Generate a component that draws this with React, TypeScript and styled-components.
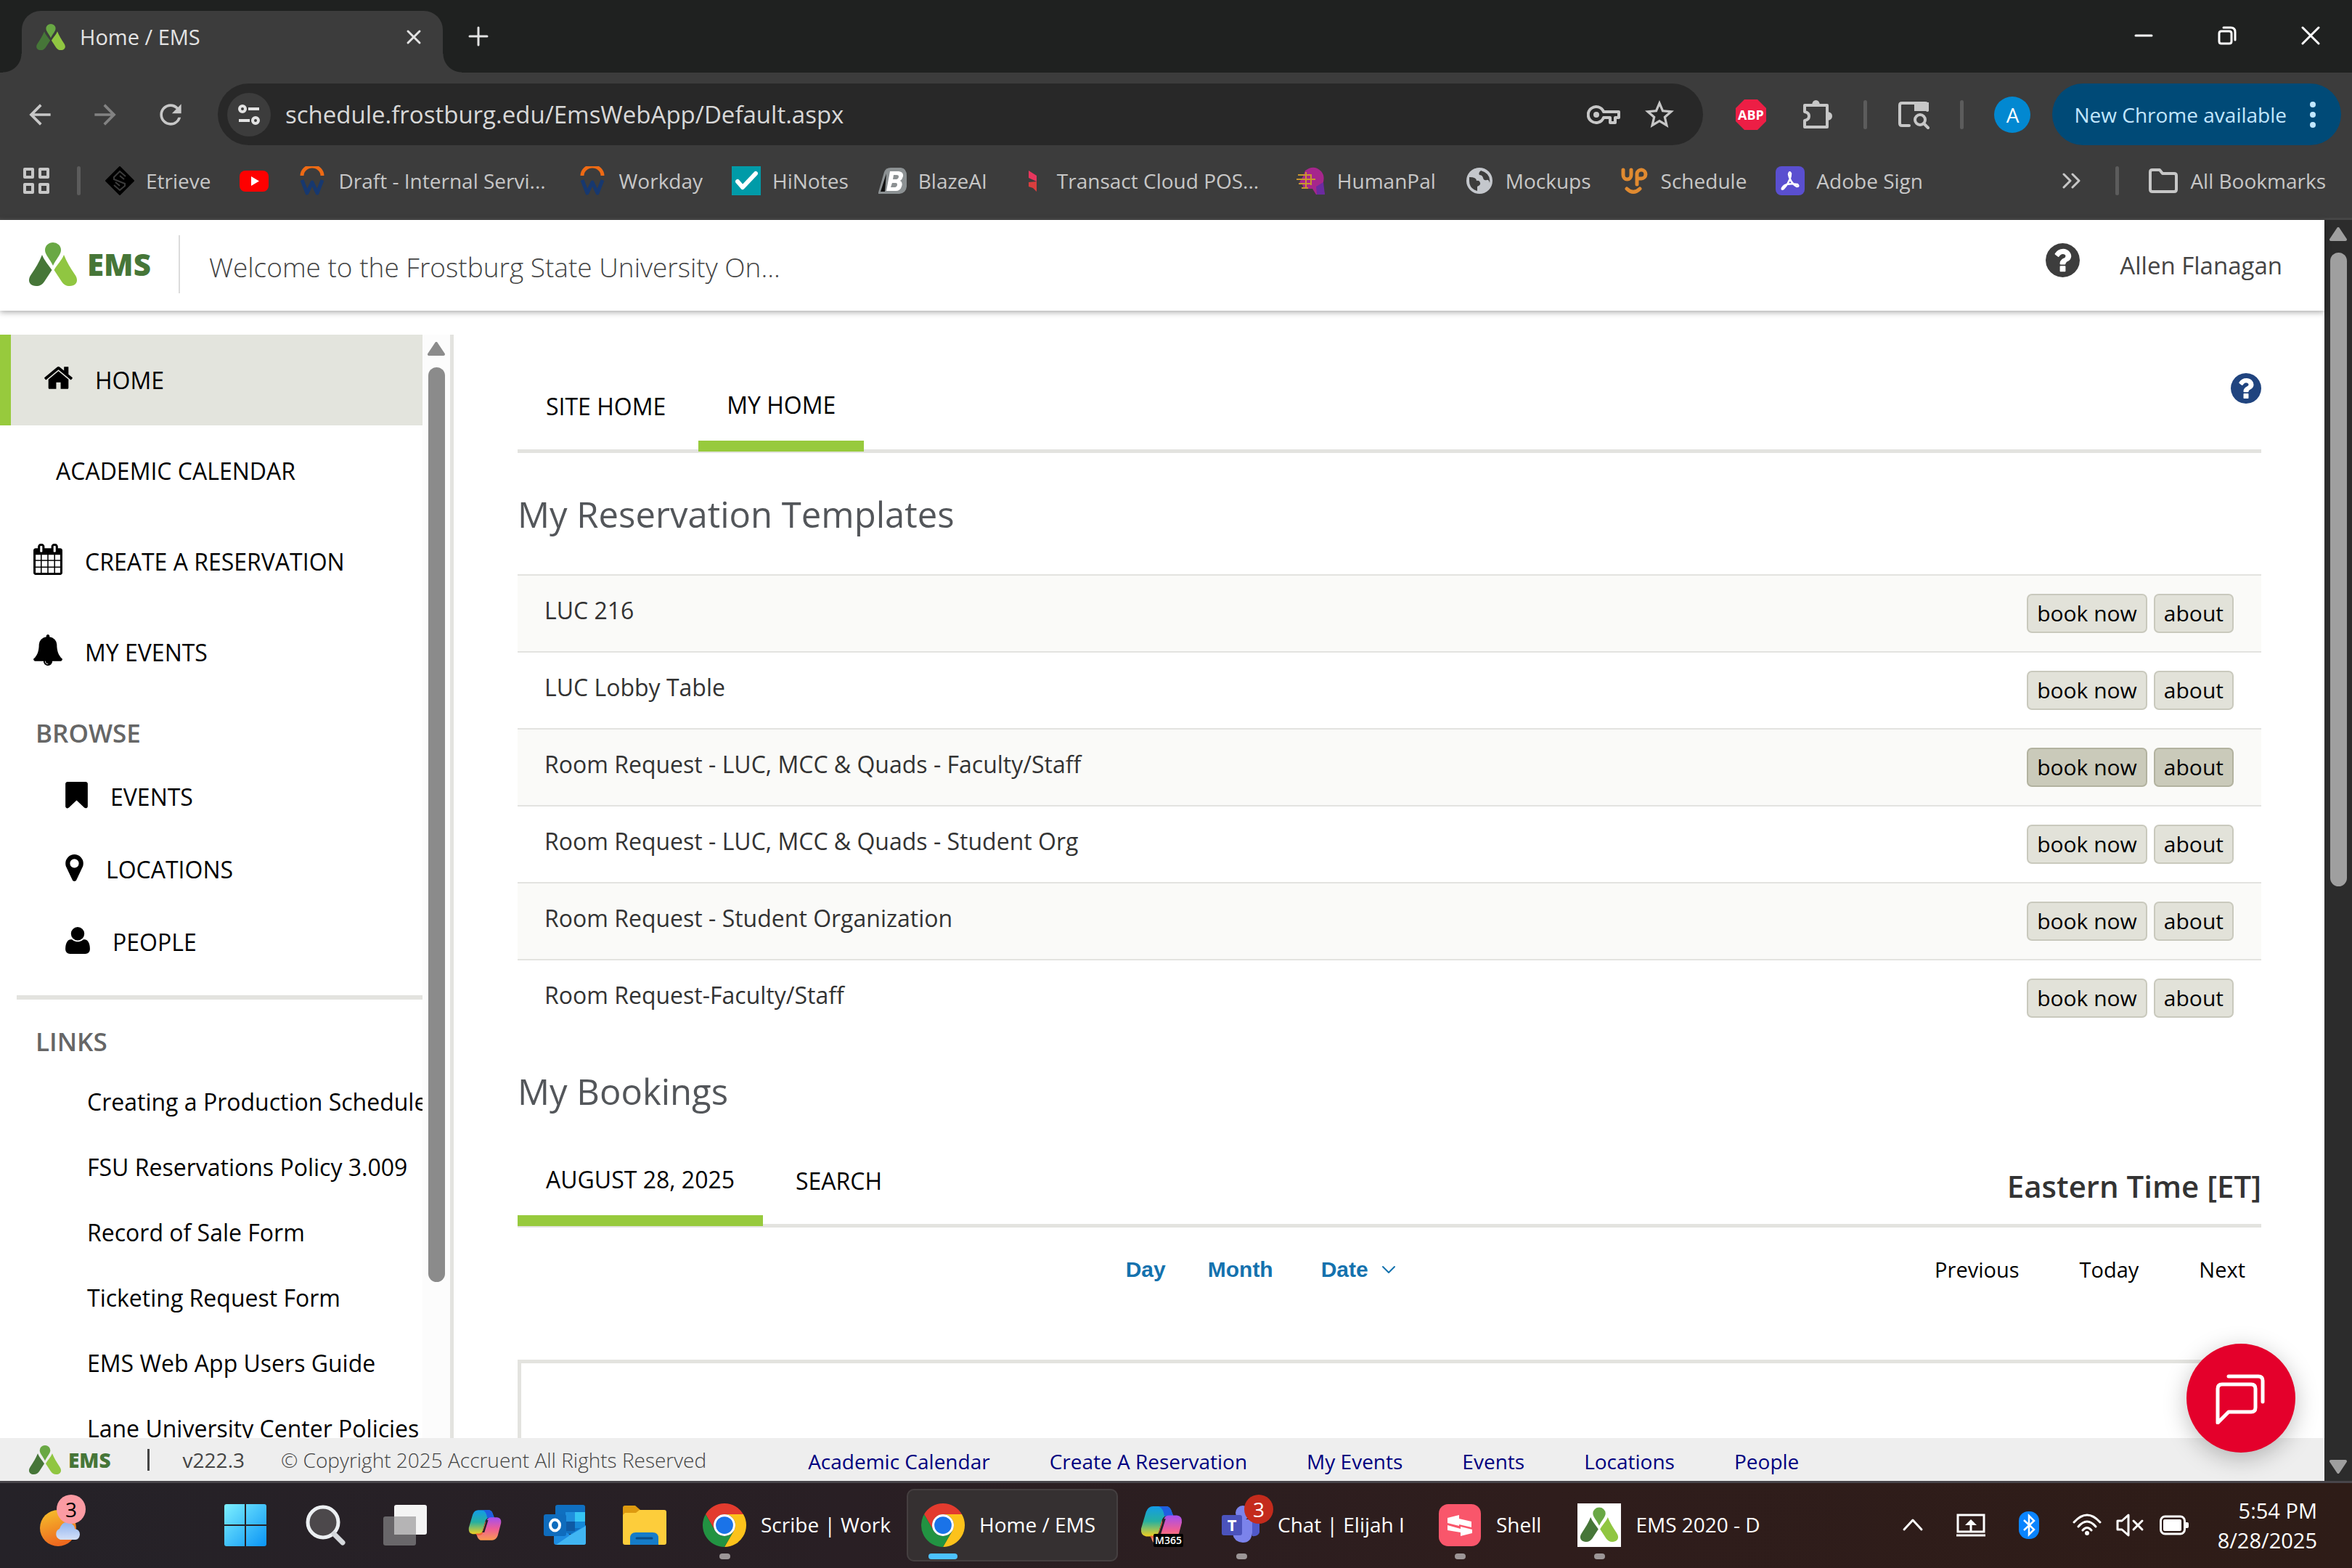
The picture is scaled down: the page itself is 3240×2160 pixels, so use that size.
import React from "react";
import styled, { createGlobalStyle, css } from "styled-components";
import { MdArrowBack, MdArrowForward, MdRefresh, MdStarBorder } from "react-icons/md";

const GlobalStyle = createGlobalStyle`
  *, *::before, *::after { box-sizing: border-box; }
  body { margin: 0; background: #252228; font-family: "Open Sans", "Noto Sans", sans-serif; }
  button, input { font: inherit; color: inherit; }
  button { border: 0; padding: 0; background: none; cursor: pointer; }
  a { color: inherit; text-decoration: none; }
  h1, h2, ul { margin: 0; padding: 0; }
  ul { list-style: none; }
  svg { display: block; flex: none; }
`;

/* ---------- Browser chrome ---------- */

const Screen = styled.div`
  display: flex;
  flex-direction: column;
  height: 100vh;
  overflow: hidden;
`;

const TabStrip = styled.header`
  display: flex;
  align-items: flex-end;
  flex: none;
  height: 100px;
  padding: 0 0 0 30px;
  background: #1f2120;
  color: #e3e3e3;
`;

const Tab = styled.div`
  position: relative;
  display: flex;
  align-items: center;
  width: 580px;
  height: 85px;
  padding: 0 28px 14px 20px;
  border-radius: 26px 26px 0 0;
  background: #3c3c3c;
  font-size: 29px;
  line-height: 40px;
  &::before, &::after {
    content: "";
    position: absolute;
    bottom: 0;
    width: 26px;
    height: 26px;
  }
  &::before { right: 100%; background: radial-gradient(circle at 0 0, transparent 25px, #3c3c3c 26px); }
  &::after { left: 100%; background: radial-gradient(circle at 100% 0, transparent 25px, #3c3c3c 26px); }
`;

const TabTitle = styled.span`
  flex: 1;
  padding-left: 20px;
`;

const IconButton = styled.button<{ $w: number; $dim?: boolean }>`
  display: flex;
  align-items: center;
  justify-content: center;
  flex: none;
  width: ${(p) => p.$w}px;
  opacity: ${(p) => (p.$dim ? 0.5 : 1)};
`;

const NewTab = styled(IconButton)`
  height: 100px;
  margin-left: 24px;
`;

const WindowControls = styled.div`
  display: flex;
  height: 98px;
  align-self: flex-start;
  margin-left: auto;
  color: #fff;
`;

const Toolbar = styled.div`
  display: flex;
  align-items: center;
  flex: none;
  height: 115px;
  padding: 0 15px 0 10px;
  background: #3c3c3c;
  color: #c7c7c7;
`;

const Omnibox = styled.div`
  display: flex;
  align-items: center;
  flex: 1;
  height: 85px;
  margin-left: 20px;
  padding: 0 36px 0 13px;
  border-radius: 43px;
  background: #282828;
`;

const SiteInfo = styled.button`
  display: grid;
  place-items: center;
  width: 60px;
  height: 60px;
  border-radius: 50%;
  background: #3c3c3c;
`;

const UrlInput = styled.input`
  flex: 1;
  min-width: 0;
  margin: 0 20px;
  padding: 0;
  border: 0;
  outline: 0;
  background: none;
  color: #d8d8d8;
  font-size: 33px;
  line-height: 46px;
`;

const OmniActions = styled.div`
  display: flex;
  align-items: center;
  gap: 30px;
`;

const Extensions = styled.div`
  display: flex;
  align-items: center;
  gap: 42px;
  margin: 0 30px 0 45px;
`;

const Separator = styled.span`
  width: 5px;
  height: 40px;
  border-radius: 3px;
  background: #5c5c5c;
`;

const Avatar = styled.button`
  width: 50px;
  height: 50px;
  border-radius: 50%;
  background: #0288d1;
  color: #fff;
  font-size: 28px;
  line-height: 50px;
`;

const UpdatePill = styled.button`
  display: flex;
  align-items: center;
  gap: 31px;
  height: 85px;
  padding: 0 34px 0 30px;
  border-radius: 43px;
  background: #004a77;
  color: #c2e7ff;
  font-size: 28px;
  line-height: 38px;
  white-space: nowrap;
`;

const BookmarkBar = styled.nav`
  display: flex;
  align-items: center;
  flex: none;
  height: 88px;
  padding: 0 36px 18px 30px;
  border-bottom: 3px solid #464646;
  background: #3c3c3c;
  color: #c7c7c7;
  font-size: 28px;
  line-height: 38px;
  white-space: nowrap;
`;

const BookmarkList = styled.ul`
  display: flex;
  gap: 40px;
  margin: 0 auto 0 34px;
`;

const Bookmark = styled.a`
  display: flex;
  align-items: center;
  gap: 16px;
  min-height: 40px;
`;

const BookmarkLabel = styled.span<{ $full: boolean }>`
  min-width: ${(p) => (p.$full ? "290px" : "0")};
`;

const Spaced = styled.div`
  display: flex;
  align-items: center;
  gap: 36px;
`;

const SpacedEnd = styled(Spaced)`
  gap: 40px;
`;

/* ---------- EMS page ---------- */

const Viewport = styled.div`
  display: flex;
  flex: 1;
  min-height: 0;
`;

const Page = styled.div`
  position: relative;
  display: flex;
  flex-direction: column;
  flex: 1;
  min-width: 0;
  background: #fff;
`;

const PageHeader = styled.header`
  z-index: 1;
  display: flex;
  align-items: center;
  flex: none;
  height: 125px;
  padding: 0 58px 4px 40px;
  background: #fff;
  box-shadow: 0 2px 8px rgba(0, 0, 0, 0.35);
  color: #444;
`;

const Brand = styled.a<{ $small?: boolean }>`
  display: flex;
  align-items: center;
  gap: ${(p) => (p.$small ? 10 : 14)}px;
  color: #467638;
  font-size: ${(p) => (p.$small ? 28 : 42)}px;
  line-height: 58px;
  font-weight: 800;
`;

const SiteTitle = styled.h1`
  margin-left: 38px;
  padding: 18px 0 10px 40px;
  border-left: 2px solid #dcdcdc;
  color: #444;
  font-size: 37px;
  line-height: 52px;
  font-weight: 300;
`;

const HeaderUser = styled.div`
  display: flex;
  align-items: center;
  gap: 55px;
  margin-left: auto;
  font-size: 33px;
  line-height: 46px;
  a { padding-top: 4px; }
  button { margin-bottom: 10px; }
`;

const Body = styled.div`
  display: flex;
  flex: 1;
  min-height: 0;
`;

const Sidebar = styled.aside`
  display: flex;
  flex: none;
  width: 625px;
  margin-top: 33px;
  border-right: 5px solid #e3e3df;
  overflow: hidden;
`;

const SideNav = styled.nav`
  flex: 1;
  min-width: 0;
  overflow: hidden;
  color: #000;
  font-size: 32px;
  line-height: 46px;
  white-space: nowrap;
`;

const NavItem = styled.a<{ $active?: boolean; $sub?: boolean }>`
  display: flex;
  align-items: center;
  gap: 31px;
  height: ${(p) => (p.$sub ? 100 : 125)}px;
  padding-left: ${(p) => (p.$sub ? 90 : 46)}px;
  svg { margin-bottom: 6px; }
  ${(p) =>
    p.$active &&
    css`
      border-left: 15px solid #97ca3d;
      background: #e3e4dd;
    `}
`;

const NavHeading = styled.h2`
  padding: 25px 0 14px 49px;
  color: #666;
  font-size: 35px;
  line-height: 48px;
  font-weight: 600;
`;

const NavRule = styled.hr`
  height: 6px;
  margin: 23px 0 9px 23px;
  border: 0;
  background: #e3e3df;
`;

const SideLink = styled.a`
  display: block;
  padding: 22px 0 22px 120px;
`;

const Track = styled.div<{ $dark?: boolean }>`
  display: flex;
  flex-direction: column;
  align-items: center;
  flex: none;
  width: 38px;
  padding: 10px 0;
  background: ${(p) => (p.$dark ? "#2c2c2c" : "#fcfcfc")};
  color: ${(p) => (p.$dark ? "#9f9f9f" : "#8b8b8b")};
`;

const Thumb = styled.div<{ $part: number }>`
  flex: ${(p) => p.$part};
  width: 23px;
  margin-top: 16px;
  border-radius: 12px;
  background: currentColor;
`;

const Rest = styled.div<{ $part: number }>`
  flex: ${(p) => p.$part};
`;

const Main = styled.main`
  display: flex;
  flex-direction: column;
  flex: 1;
  min-width: 0;
  padding: 86px 87px 0 88px;
  overflow: hidden;
`;

const TabBar = styled.div`
  display: flex;
  gap: 6px;
  flex: none;
  height: 110px;
  border-bottom: 5px solid #e3e3df;
`;

const PageTab = styled.button<{ $active?: boolean }>`
  height: 108px;
  padding: ${(p) => (p.$active ? "21px 39px 26px" : "23px 39px 24px")};
  border-bottom: 15px solid ${(p) => (p.$active ? "#97ca3d" : "transparent")};
  color: #000;
  font-size: 32px;
  line-height: 46px;
  white-space: nowrap;
`;

const TabAside = styled.div`
  display: flex;
  align-items: flex-start;
  margin-left: auto;
`;

const TimeZone = styled.strong`
  color: #333;
  font-size: 42px;
  line-height: 105px;
  font-weight: 600;
`;

const SectionTitle = styled.h2<{ $first?: boolean }>`
  flex: none;
  margin: ${(p) => (p.$first ? "51px 0 50px" : "43px 0 45px")};
  color: #53565a;
  font-size: 49px;
  line-height: 66px;
  font-weight: 400;
`;

const TemplateTable = styled.table`
  flex: none;
  width: 100%;
  border-collapse: separate;
  border-spacing: 0;
  color: #333;
  font-size: 32px;
  line-height: 46px;
  tr:nth-child(odd) { background: #fafaf8; }
  td {
    height: 106px;
    padding: 0 38px 0 37px;
    border-top: 2px solid #e3e3e0;
    vertical-align: middle;
  }
  td:first-child { padding-bottom: 8px; }
`;

const RowActions = styled.div`
  display: flex;
  justify-content: flex-end;
  gap: 9px;
`;

const SmallButton = styled.button<{ $pressed?: boolean }>`
  padding: 4px 12px;
  border: 2px solid ${(p) => (p.$pressed ? "#b2b29f" : "#c9c9bd")};
  border-radius: 7px;
  background: ${(p) => (p.$pressed ? "#cacaba" : "#e2e2d9")};
  color: #000;
  font-size: 30px;
  line-height: 42px;
`;

const Controls = styled.div`
  display: flex;
  align-items: center;
  flex: none;
  height: 116px;
  margin-bottom: 66px;
  padding: 0 22px 0 calc(35% - 3px);
`;

const ViewLinks = styled.div`
  display: flex;
  align-items: center;
  gap: 58px;
  color: #1472ae;
  font: bold 30px/40px "Liberation Sans", Arial, sans-serif;
  button:last-child { display: flex; align-items: center; gap: 18px; margin-left: 8px; }
`;

const PagerLinks = styled.div`
  display: flex;
  gap: 83px;
  margin-left: auto;
  color: #000;
  font-size: 29px;
  line-height: 40px;
`;

const CalendarBox = styled.div`
  flex: 1;
  border: 5px solid #e3e3df;
  border-bottom: 0;
`;

const ChatButton = styled.button`
  position: absolute;
  right: 40px;
  bottom: 39px;
  z-index: 3;
  display: grid;
  place-items: center;
  width: 150px;
  height: 150px;
  border-radius: 50%;
  background: #e4002b;
  box-shadow: 0 8px 32px rgba(0, 0, 0, 0.25);
`;

const PageFooter = styled.footer`
  z-index: 2;
  display: flex;
  align-items: center;
  flex: none;
  height: 59px;
  padding-left: 40px;
  background: #eee;
  color: #444;
  font-size: 28px;
  line-height: 38px;
  white-space: nowrap;
`;

const FooterBar = styled.span`
  width: 3px;
  height: 30px;
  margin: 0 46px 0 50px;
  background: #444;
`;

const Copyright = styled.span`
  margin-left: 50px;
  font-weight: 300;
`;

const FooterLinks = styled.nav`
  display: flex;
  gap: 82px;
  margin-left: 140px;
  padding-top: 4px;
  color: #00007f;
`;

/* ---------- Taskbar ---------- */

const Taskbar = styled.footer`
  display: flex;
  align-items: center;
  flex: none;
  height: 120px;
  padding: 0 48px 2px 0;
  border-top: 3px solid #48454a;
  background: linear-gradient(90deg, #252228, #291f24 36%, #2f1d1c 66%, #2e1c17);
  color: #fff;
  font-size: 29px;
  line-height: 41px;
  white-space: nowrap;
`;

const WeatherSlot = styled.div`
  width: 288px;
  padding-left: 50px;
`;

const TaskList = styled.div`
  display: flex;
  gap: 10px;
`;

const TaskButton = styled.button<{ $active?: boolean }>`
  display: flex;
  align-items: center;
  gap: 20px;
  height: 100px;
  padding: 0 20px;
  border-radius: 10px;
  background: ${(p) => (p.$active ? "#353031" : "none")};
  box-shadow: ${(p) => (p.$active ? "inset 0 0 0 2px #453f40" : "none")};
`;

const TaskIcon = styled.span<{ $mark?: "dot" | "bar" }>`
  position: relative;
  display: grid;
  place-items: center;
  width: 60px;
  height: 60px;
  ${(p) =>
    p.$mark &&
    css`
      &::after {
        content: "";
        position: absolute;
        top: 69px;
        left: ${p.$mark === "bar" ? 10 : 23}px;
        width: ${p.$mark === "bar" ? 40 : 15}px;
        height: 8px;
        border-radius: 4px;
        background: ${p.$mark === "bar" ? "#4cc2ff" : "#9c9697"};
      }
    `}
`;

const TaskLabel = styled.span<{ $wide?: boolean }>`
  width: ${(p) => (p.$wide ? "181px" : "auto")};
  margin-right: ${(p) => (p.$wide ? -10 : 0)}px;
  overflow: hidden;
  font-size: 28px;
  text-align: left;
`;

const Badge = styled.span<{ $pink?: boolean }>`
  position: absolute;
  top: -12px;
  right: ${(p) => (p.$pink ? -8 : -14)}px;
  width: 40px;
  height: 40px;
  border-radius: 50%;
  background: ${(p) => (p.$pink ? "#fb9ba3" : "#c42b1c")};
  color: ${(p) => (p.$pink ? "#000" : "#fff")};
  font-size: 28px;
  line-height: 40px;
  text-align: center;
`;

const Tray = styled.div`
  display: flex;
  align-items: center;
  gap: 40px;
  margin-left: auto;
`;

const TrayGroup = styled.div`
  display: flex;
  gap: 20px;
`;

const Clock = styled.time`
  text-align: right;
`;

/* ---------- Drawings ---------- */

const Line = ({ d, w = 40, h = w, box = `0 0 ${w} ${h}`, sw = 4, color = "currentColor" }: any) => (
  <svg width={w} height={h} viewBox={box} fill="none" stroke={color} strokeWidth={sw} strokeLinecap="round" strokeLinejoin="round">
    <path d={d} />
  </svg>
);

const glyphs = {
  home: [90, 1612, "M1472 992v480q0 26-19 45t-45 19h-384v-384h-256v384h-384q-26 0-45-19t-19-45v-480q0-1 .5-3t.5-3l575-474 575 474q1 2 1 6zm223-69l-62 74q-8 9-21 11h-3q-13 0-21-7l-692-577-692 577q-12 8-24 7-13-2-21-11l-62-74q-8-10-7-23.5t11-21.5l719-599q32-26 76-26t76 26l244 204v-195q0-14 9-23t23-9h192q14 0 23 9t9 23v408l219 182q10 8 11 21.5t-7 23.5z"],
  calendar: [64, 1664, "M192 1664h288v-288h-288v288zm352 0h320v-288h-320v288zm-352-352h288v-320h-288v320zm352 0h320v-320h-320v320zm-352-384h288v-288h-288v288zm736 736h320v-288h-320v288zm-384-736h320v-288h-320v288zm768 736h288v-288h-288v288zm-384-352h320v-320h-320v320zm-352-864v-288q0-13-9.5-22.5t-22.5-9.5h-64q-13 0-22.5 9.5t-9.5 22.5v288q0 13 9.5 22.5t22.5 9.5h64q13 0 22.5-9.5t9.5-22.5zm736 864h288v-320h-288v320zm-384-384h320v-288h-320v288zm384 0h288v-288h-288v288zm32-480v-288q0-13-9.5-22.5t-22.5-9.5h-64q-13 0-22.5 9.5t-9.5 22.5v288q0 13 9.5 22.5t22.5 9.5h64q13 0 22.5-9.5t9.5-22.5zm384-64v1280q0 52-38 90t-90 38h-1408q-52 0-90-38t-38-90v-1280q0-52 38-90t90-38h128v-96q0-66 47-113t113-47h64q66 0 113 47t47 113v96h384v-96q0-66 47-113t113-47h64q66 0 113 47t47 113v96h128q52 0 90 38t38 90z"],
  bell: [64, 1664, "M912 1696q0-16-16-16-59 0-101.5-42.5t-42.5-101.5q0-16-16-16t-16 16q0 73 51.5 124.5t124.5 51.5q16 0 16-16zm816-288q0 52-38 90t-90 38h-448q0 106-75 181t-181 75-181-75-75-181h-448q-52 0-90-38t-38-90q50-42 91-88t85-119.5 74.5-158.5 50-206 19.5-260q0-152 117-282.5t307-158.5q-8-19-8-39 0-40 28-68t68-28 68 28 28 68q0 20-8 39 190 28 307 158.5t117 282.5q0 139 19.5 260t50 206 74.5 158.5 85 119.5 91 88z"],
  bookmark: [256, 1280, "M1420 128q23 0 44 9 33 13 52.5 41t19.5 62v1289q0 34-19.5 62t-52.5 41q-19 8-44 8-48 0-83-32l-441-424-441 424q-36 33-83 33-23 0-44-9-33-13-52.5-41t-19.5-62v-1289q0-34 19.5-62t52.5-41q21-9 44-9h1048z"],
  marker: [384, 1024, "M1152 640q0-106-75-181t-181-75-181 75-75 181 75 181 181 75 181-75 75-181zm256 0q0 109-33 179l-364 774q-16 33-47.5 52t-67.5 19-67.5-19-46.5-52l-365-774q-33-70-33-179 0-212 150-362t362-150 362 150 150 362z"],
  user: [192, 1408, "M1600 1405q0 120-73 189.5t-194 69.5h-874q-121 0-194-69.5t-73-189.5q0-53 3.5-103.5t14-109 26.5-108.5 43-97.5 62-81 85.5-53.5 111.5-20q9 0 42 21.5t74.5 48 108 48 133.5 21.5 133.5-21.5 108-48 74.5-48 42-21.5q61 0 111.5 20t85.5 53.5 62 81 43 97.5 26.5 108.5 14 109 3.5 103.5zm-320-893q0 159-112.5 271.5t-271.5 112.5-271.5-112.5-112.5-271.5 112.5-271.5 271.5-112.5 271.5 112.5 112.5 271.5z"],
} as const;

const Glyph = ({ name }: { name: keyof typeof glyphs }) => {
  const [x, w, d] = glyphs[name];
  return (
    <svg width={Math.round((w * 43) / 1792)} height={43} viewBox={`${x} 0 ${w} 1792`} fill="currentColor">
      <path d={d} />
    </svg>
  );
};

const HelpIcon = ({ size, color }: { size: number; color: string }) => (
  <svg width={size} height={size} viewBox="128 128 1536 1536" fill={color}>
    <path d="M1024 1376v-192q0-14-9-23t-23-9h-192q-14 0-23 9t-9 23v192q0 14 9 23t23 9h192q14 0 23-9t9-23zm256-672q0-88-55.5-163t-138.5-116-170-41q-243 0-371 213-15 24 8 42l132 100q7 6 19 6 16 0 25-12 53-68 86-92 34-24 86-24 48 0 85.5 26t37.5 59q0 38-20 61t-68 45q-63 28-115.5 86.5t-52.5 125.5v36q0 14 9 23t23 9h192q14 0 23-9t9-23q0-19 21.5-49.5t54.5-49.5q32-18 49-28.5t46-35 44.5-48 28-60.5 12.5-81zm384 192q0 209-103 385.5t-279.5 279.5-385.5 103-385.5-103-279.5-279.5-103-385.5 103-385.5 279.5-279.5 385.5-103 385.5 103 279.5 279.5 103 385.5z" />
  </svg>
);

const EmsLeaves = () => (
  <>
    <path d="M33 32C29 23 22 17 22 10.500A11 10.500 0 0 1 44 10.500C44 17 37 23 33 32Z" fill="#69a844" />
    <path d="M18 17C21 25 27 31 31.500 38L21 54C18 58 15 60 10 60C3 60 0 56 0 52C0 49 1 47 3 44C9 35 14 27 18 17Z" fill="#467638" />
    <path d="M48 17C45 25 38 31 34.500 38L45 54C48 58 51 60 56 60C63 60 66 56 66 52C66 49 65 47 63 44C57 35 52 27 48 17Z" fill="#90c641" />
  </>
);

const EmsMark = ({ w }: { w: number }) => (
  <svg width={w} height={Math.round((w * 60) / 66)} viewBox="0 0 66 60">
    <EmsLeaves />
  </svg>
);

const Arrow = ({ down }: { down?: boolean }) => (
  <svg width="24" height="19" viewBox="0 0 24 19" fill="currentColor" stroke="currentColor" strokeWidth="4" strokeLinejoin="round">
    <path d={down ? "M2 2H22L12 17Z" : "M2 17H22L12 2Z"} />
  </svg>
);

const AppsIcon = () => <Line w={40} sw={4} d="M4 4h11v11H4ZM25 4h11v11H25ZM4 25h11v11H4ZM25 25h11v11H25Z" />;

const EtrieveIcon = () => (
  <svg width="40" height="40" viewBox="0 0 40 40">
    <path d="M20 1 39 20 20 39 1 20Z" fill="#000" stroke="#000" strokeWidth="2" strokeLinejoin="round" />
    <path d="M28 14 20 7 12 15V18L27 24V27L20 33 12 26M20 13 26 18M14 22 20 27" fill="none" stroke="#3c3c3c" strokeWidth="2" />
  </svg>
);
const YoutubeIcon = () => (
  <svg width="40" height="40" viewBox="0 0 40 40">
    <rect y="6" width="40" height="29" rx="8" fill="#f00" />
    <path d="M16 14 27 20.500 16 27Z" fill="#fff" />
  </svg>
);
const WorkdayIcon = () => (
  <svg width="40" height="40" viewBox="0 0 40 40" fill="none">
    <path d="M6 13A14 13 0 0 1 34 13" stroke="#ee6a14" strokeWidth="5" />
    <path d="M6 19 13 37 20 22 27 37 34 19" stroke="#17386f" strokeWidth="5" strokeLinejoin="round" />
  </svg>
);
const HiNotesIcon = () => (
  <svg width="40" height="40" viewBox="0 0 40 40">
    <rect width="40" height="40" fill="#009ba8" />
    <path d="M8 21 15 29 33 10" fill="none" stroke="#fff" strokeWidth="6" strokeLinecap="round" strokeLinejoin="round" />
  </svg>
);
const BlazeIcon = () => (
  <svg width="40" height="40" viewBox="0 0 40 40">
    <path d="M1 36 9 8Q11 2 18 2H32Q40 3 40 13V28Q39 37 30 38H1Z" fill="#8c9193" />
    <path d="M4 35 12 10 10 35Z" fill="#111" />
    <path d="M17 7H29Q36 8 35 14Q34 18 31 20Q35 22 33 28Q31 34 25 34H12ZM22 12 21 18H26Q29 17 29 14Q29 12 26 12ZM20 23 18 29H24Q27 28 27 25Q27 23 25 23Z" fill="#fff" fillRule="evenodd" />
  </svg>
);
const TransactIcon = () => (
  <svg width="40" height="40" viewBox="0 0 40 40" fill="#e8365d">
    <path d="M17 6 28 13V21L17 16Z" />
    <path d="M28 21 17 22V28L23 30 28 35Z" fill="#d93e3e" />
  </svg>
);
const HumanIcon = () => (
  <svg width="40" height="40" viewBox="0 0 40 40">
    <path d="M12 6Q24-3 34 7Q40 14 36 25L39 39H27L22 31H10L8 25L4 22L9 14Z" fill="#a6268c" />
    <path d="M27 28 37 22 39 39H28Z" fill="#6b2ba0" />
    <path d="M2 12H20M0 18H26M3 24H20M7 30H16M13 8V30M20 11V26" stroke="#c9962f" strokeWidth="2" />
  </svg>
);
const GlobeIcon = () => (
  <svg width="40" height="40" viewBox="0 0 40 40">
    <circle cx="20" cy="20" r="18" fill="#c4c7cc" />
    <path d="M6 15Q16 15 16 20Q20 19 21 23Q22 26 17 28V34Q6 31 6 20ZM22 6Q18 9 20 12Q24 12 25 16Q26 20 30 19Q33 18 34 23Q36 10 22 6Z" fill="#3c3c3c" />
  </svg>
);
const UpIcon = () => (
  <svg width="40" height="40" viewBox="0 0 40 40" fill="none" stroke="#e08a30" strokeWidth="5" strokeLinecap="round">
    <path d="M4 5V12A5.500 6 0 0 0 15 12V5M23 25V10A6 6 0 1 1 29 17H24M9 31Q18 40 27 31" />
  </svg>
);
const AdobeIcon = () => (
  <svg width="40" height="40" viewBox="0 0 40 40">
    <rect width="40" height="40" rx="8" fill="#5a4fd0" />
    <path d="M9 30Q13 22 30 25Q33 28 29 28Q20 23 18 11Q19 6 21 10Q21 20 11 31Q8 33 9 30Z" fill="none" stroke="#fff" strokeWidth="2.500" />
  </svg>
);
const FolderIcon = () => <Line w={42} h={40} sw={4} d="M3 8Q3 5 6 5H16L20 10H36Q39 10 39 13V32Q39 35 36 35H6Q3 35 3 32Z" />;

const AbpIcon = () => (
  <svg width="50" height="42" viewBox="0 0 50 42">
    <path d="M12 0H30L42 12V30L30 42H12L0 30V12Z" fill="#ed1e45" />
    <text x="21" y="28" fill="#fff" fontSize="18" fontWeight="700" textAnchor="middle" fontFamily="Open Sans, sans-serif">ABP</text>
  </svg>
);
const PuzzleIcon = () => (
  <svg width="42" height="42" viewBox="0 0 42 42" fill="none" stroke="currentColor" strokeWidth="4" strokeLinejoin="round">
    <path d="M3 8H34V38H3V29Q9 28 9 23Q9 18 3 17Z" />
    <path d="M13 7Q14 1 18.500 1Q23 1 24 7ZM35 17Q41 18 41 23Q41 28 35 29Z" fill="currentColor" stroke="none" />
  </svg>
);
const TabSearchIcon = () => (
  <svg width="44" height="42" viewBox="0 0 44 42" fill="none" stroke="currentColor" strokeWidth="4" strokeLinecap="round">
    <path d="M16 36H6Q3 36 3 33V8Q3 5 6 5H38Q41 5 41 8V15" />
    <path d="M25 6H41V14H25Z" fill="currentColor" />
    <circle cx="31" cy="28" r="7" />
    <path d="M36 33 42 39" />
  </svg>
);
const KeyIcon = () => (
  <svg width="46" height="30" viewBox="0 0 46 30" fill="none" stroke="currentColor" strokeWidth="4" strokeLinejoin="round">
    <path d="M23 11A11 11 0 1 0 23 19H32V26H39V19H44V11Z" />
    <circle cx="13" cy="15" r="4" fill="currentColor" stroke="none" />
  </svg>
);
const TuneIcon = () => (
  <svg width="32" height="32" viewBox="0 0 32 32" fill="none" stroke="#e3e3e3" strokeWidth="4">
    <circle cx="7" cy="8" r="4" />
    <path d="M15 8H30M2 24H17" />
    <circle cx="25" cy="24" r="4" />
  </svg>
);
const DotsIcon = () => (
  <svg width="10" height="36" viewBox="0 0 10 36" fill="currentColor">
    <circle cx="5" cy="4" r="4" />
    <circle cx="5" cy="18" r="4" />
    <circle cx="5" cy="32" r="4" />
  </svg>
);

const WeatherIcon = () => (
  <svg width="60" height="70" viewBox="0 0 60 70">
    <defs>
      <linearGradient id="sun" x2="0.300" y2="1"><stop stopColor="#f6c22c" /><stop offset="1" stopColor="#ee6a1f" /></linearGradient>
      <linearGradient id="cloud" x2="0" y2="1"><stop stopColor="#8fb3ee" /><stop offset="1" stopColor="#d4e0f8" /></linearGradient>
    </defs>
    <circle cx="30" cy="34" r="25" fill="url(#sun)" />
    <path d="M33 50A8 8 0 0 1 32 35Q36 23 47 27Q53 30 53 35Q60 36 60 43Q59 50 54 50Z" fill="url(#cloud)" />
  </svg>
);
const WindowsIcon = () => (
  <svg width="58" height="58" viewBox="0 0 58 58">
    <defs><linearGradient id="win" x2="1" y2="1"><stop stopColor="#7df0ff" /><stop offset="1" stopColor="#0a94f5" /></linearGradient></defs>
    <path d="M3 0H28V28H0V3Q0 0 3 0ZM30 0H55Q58 0 58 3V28H30ZM0 30H28V58H3Q0 58 0 55ZM30 30H58V55Q58 58 55 58H30Z" fill="url(#win)" />
  </svg>
);
const SearchIcon = () => (
  <svg width="58" height="58" viewBox="0 0 58 58" fill="none">
    <circle cx="26" cy="25" r="21" fill="#4c484b" stroke="#eceff2" strokeWidth="5" />
    <path d="M41 41 53 53" stroke="#d5d8dc" strokeWidth="7" strokeLinecap="round" />
  </svg>
);
const TaskViewIcon = () => (
  <svg width="60" height="56" viewBox="0 0 60 56">
    <rect y="16" width="45" height="40" rx="3" fill="#69676a" />
    <rect x="15" width="45" height="41" rx="3" fill="#f4f4f4" />
    <path d="M15 16H45V41H15Z" fill="#b5b4b5" />
  </svg>
);
const CopilotIcon = ({ size }: { size: number }) => (
  <svg width={size} height={size} viewBox="0 0 60 56">
    <defs>
      <linearGradient id="cpa" x2="0" y2="1"><stop stopColor="#139be8" /><stop offset="0.500" stopColor="#26b0a0" /><stop offset="1" stopColor="#f2cf20" /></linearGradient>
      <linearGradient id="cpb" x2="0" y2="1"><stop stopColor="#a34ff0" /><stop offset="0.500" stopColor="#ee5c97" /><stop offset="1" stopColor="#fb9a50" /></linearGradient>
    </defs>
    <path d="M18 1H38Q43 2 45 10L47 15H37Q33 15 31 20L26 38Q24 44 18 44H8Q0 43 1 33L8 9Q11 1 18 1Z" fill="url(#cpa)" />
    <path d="M30 1H38Q43 2 45 10L47 15H34Q33 4 26 1Z" fill="#1f5fe0" />
    <path d="M43 55H22Q17 54 15 44H21Q26 43 28 38L33 20Q35 14 41 14H52Q60 15 59 24L53 47Q50 55 43 55Z" fill="url(#cpb)" />
    <path d="M31 28 26 43Q24 47 18 46H15L14 43Q24 44 26 38L31 20Z" fill="#f1633c" />
    <path d="M27 37 33 19H36L29 41H25Z" fill="#252228" />
  </svg>
);
const OutlookIcon = () => (
  <svg width="58" height="56" viewBox="0 0 58 56">
    <rect x="16" width="41" height="40" rx="3" fill="#0f6fc0" />
    <path d="M30 10H43V23H30Z" fill="#1f8fdd" />
    <path d="M43 10H57V23H43Z" fill="#35c4f3" />
    <path d="M30 23H43V36H30Z" fill="#0e5aa5" />
    <path d="M43 23H57V32H43Z" fill="#1488d8" />
    <path d="M14 28 36 41 58 28V52Q58 55 55 55H17Q14 55 14 52Z" fill="#1d8be0" />
    <path d="M58 29V52Q58 55 55 55H17L36 42Z" fill="#40b5f2" />
    <rect y="13" width="31" height="30" rx="3" fill="#0f6cbd" />
    <ellipse cx="15.500" cy="28" rx="6.500" ry="7.500" fill="none" stroke="#fff" strokeWidth="4" />
  </svg>
);
const ExplorerIcon = () => (
  <svg width="60" height="54" viewBox="0 0 60 54">
    <path d="M0 3Q0 0 3 0H17L24 6V16H0Z" fill="#dd9a10" />
    <path d="M3 10H18L23 6H57Q60 6 60 9V51Q60 54 57 54H3Q0 54 0 51V13Z" fill="#fdcd3b" />
    <path d="M10 54V45Q10 37 18 37H41Q49 37 49 45V54Z" fill="#157cc9" />
    <path d="M19 45H40" stroke="#0a4c86" strokeWidth="3" strokeLinecap="round" />
  </svg>
);
const ChromeIcon = () => (
  <svg width="60" height="60" viewBox="0 0 48 48">
    <path d="M24 12H44.785A24 24 0 0 0 3.215 12L13.608 30A12 12 0 0 1 24 12Z" fill="#e33b2e" />
    <path d="M34.392 30L24 48A24 24 0 0 0 44.785 12H24A12 12 0 0 1 34.392 30Z" fill="#fcc21b" />
    <path d="M13.608 30L3.215 12A24 24 0 0 0 24 48L34.392 30A12 12 0 0 1 13.608 30Z" fill="#229342" />
    <circle cx="24" cy="24" r="12" fill="#fff" />
    <circle cx="24" cy="24" r="9.500" fill="#1a73e8" />
  </svg>
);
const M365Tag = styled.span`
  position: absolute;
  right: 0;
  bottom: 0;
  padding: 0 2px;
  border-radius: 2px;
  background: #000;
  font-size: 14px;
  line-height: 18px;
  font-weight: 600;
`;
const TeamsIcon = () => (
  <svg width="60" height="60" viewBox="0 0 60 60">
    <circle cx="32" cy="13" r="10" fill="#7b83eb" />
    <path d="M40 22H55V40Q53 46 45 45Z" fill="#5059c9" />
    <path d="M20 22H45V40Q44 54 32 54Q20 53 18 42Z" fill="#7b83eb" />
    <rect x="3" y="16" width="28" height="28" rx="3" fill="#4b53bc" />
    <text x="17" y="38" fill="#fff" fontSize="22" fontWeight="700" textAnchor="middle" fontFamily="Open Sans, sans-serif">T</text>
  </svg>
);
const ShellIcon = () => (
  <svg width="58" height="58" viewBox="0 0 58 58">
    <rect width="58" height="58" rx="13" fill="#f9566b" />
    <path d="M12 19 28 15V20L45 24V32L28 28V30L12 26ZM12 29 30 34V31L46 35V40L30 44V39L12 36Z" fill="#fff" />
  </svg>
);
const EmsTile = () => (
  <svg width="60" height="60" viewBox="-5 -7 76 76">
    <rect x="-5" y="-7" width="76" height="76" fill="#fff" />
    <EmsLeaves />
  </svg>
);
const CastIcon = () => (
  <svg width="40" height="40" viewBox="0 0 40 40" fill="none" stroke="#fff" strokeWidth="3">
    <path d="M2 6H38V29H2ZM0 34H40M20 28V18" />
    <path d="M12 20 20 12 28 20Z" fill="#fff" stroke="none" />
  </svg>
);
const BluetoothIcon = () => (
  <svg width="40" height="40" viewBox="0 0 40 40" fill="none">
    <rect x="6" y="1" width="28" height="38" rx="13" fill="#0a84ff" />
    <path d="M13 13 27 26 20 33V7L27 14 13 27" stroke="#fff" strokeWidth="2.500" />
  </svg>
);
const WifiIcon = () => (
  <svg width="40" height="40" viewBox="0 0 40 40" fill="none" stroke="#fff" strokeWidth="3" strokeLinecap="round">
    <path d="M2 16Q20-4 38 16M8 22Q20 8 32 22M14 27Q20 20 26 27" />
    <circle cx="20" cy="31" r="3" fill="#fff" stroke="none" />
  </svg>
);
const BatteryIcon = () => (
  <svg width="40" height="40" viewBox="0 0 40 40">
    <rect x="1.500" y="8" width="33" height="24" rx="6" fill="none" stroke="#fff" strokeWidth="3" />
    <rect x="5" y="12" width="25" height="16" rx="2" fill="#fff" />
    <path d="M36 16H38Q40 16 40 18V22Q40 24 38 24H36Z" fill="#fff" />
  </svg>
);
const ChatIcon = () => <Line w={72} h={72} sw={5} d="M19 6H60Q66 6 66 12V41M4 70V23Q4 17 10 17H50Q56 17 56 23V49Q56 55 50 55H19Z" color="#fff" />;

/* ---------- Data ---------- */

const bookmarks = [
  { icon: <EtrieveIcon />, label: "Etrieve" },
  { icon: <YoutubeIcon />, label: "" },
  { icon: <WorkdayIcon />, label: "Draft - Internal Servi..." },
  { icon: <WorkdayIcon />, label: "Workday" },
  { icon: <HiNotesIcon />, label: "HiNotes" },
  { icon: <BlazeIcon />, label: "BlazeAI" },
  { icon: <TransactIcon />, label: "Transact Cloud POS..." },
  { icon: <HumanIcon />, label: "HumanPal" },
  { icon: <GlobeIcon />, label: "Mockups" },
  { icon: <UpIcon />, label: "Schedule" },
  { icon: <AdobeIcon />, label: "Adobe Sign" },
];

const templates = [
  "LUC 216",
  "LUC Lobby Table",
  "Room Request - LUC, MCC & Quads - Faculty/Staff",
  "Room Request - LUC, MCC & Quads - Student Org",
  "Room Request - Student Organization",
  "Room Request-Faculty/Staff",
];

const links = [
  "Creating a Production Schedule",
  "FSU Reservations Policy 3.009",
  "Record of Sale Form",
  "Ticketing Request Form",
  "EMS Web App Users Guide",
  "Lane University Center Policies",
];

const footerLinks = ["Academic Calendar", "Create A Reservation", "My Events", "Events", "Locations", "People"];

/* ---------- App ---------- */

export default function App() {
  return (
    <Screen>
      <GlobalStyle />
      <TabStrip>
        <Tab>
          <EmsMark w={40} />
          <TabTitle>Home / EMS</TabTitle>
          <IconButton $w={24} aria-label="Close tab"><Line w={24} sw={3} d="M4 4 20 20M20 4 4 20" /></IconButton>
        </Tab>
        <NewTab $w={50} aria-label="New tab"><Line w={28} sw={3} d="M14 2V26M2 14H26" /></NewTab>
        <WindowControls>
          <IconButton $w={115} aria-label="Minimize"><Line w={26} sw={3} d="M2 13H24" /></IconButton>
          <IconButton $w={115} aria-label="Restore"><Line w={26} sw={3} d="M5 7H16Q19 7 19 10V21Q19 24 16 24H5Q2 24 2 21V10Q2 7 5 7ZM8 2H18Q24 2 24 8V19" /></IconButton>
          <IconButton $w={115} aria-label="Close"><Line w={26} sw={3} d="M2 2 24 24M24 2 2 24" /></IconButton>
        </WindowControls>
      </TabStrip>

      <Toolbar>
        <IconButton $w={90} aria-label="Back"><MdArrowBack size={44} /></IconButton>
        <IconButton $w={90} $dim aria-label="Forward"><MdArrowForward size={44} /></IconButton>
        <IconButton $w={90} aria-label="Reload"><MdRefresh size={44} /></IconButton>
        <Omnibox>
          <SiteInfo aria-label="Site information"><TuneIcon /></SiteInfo>
          <UrlInput aria-label="Address" defaultValue="schedule.frostburg.edu/EmsWebApp/Default.aspx" />
          <OmniActions>
            <IconButton $w={46} aria-label="Passwords"><KeyIcon /></IconButton>
            <IconButton $w={48} aria-label="Bookmark this page"><MdStarBorder size={48} /></IconButton>
          </OmniActions>
        </Omnibox>
        <Extensions>
          <IconButton $w={50} aria-label="Adblock Plus"><AbpIcon /></IconButton>
          <IconButton $w={42} aria-label="Extensions"><PuzzleIcon /></IconButton>
          <Separator />
          <IconButton $w={44} aria-label="Search tabs"><TabSearchIcon /></IconButton>
          <Separator />
          <Avatar>A</Avatar>
        </Extensions>
        <UpdatePill>New Chrome available<DotsIcon /></UpdatePill>
      </Toolbar>

      <BookmarkBar aria-label="Bookmarks">
        <Spaced>
          <IconButton $w={40} aria-label="Apps"><AppsIcon /></IconButton>
          <Separator />
        </Spaced>
        <BookmarkList>
          {bookmarks.map((b, i) => (
            <li key={i}>
              <Bookmark href="#" aria-label={b.label || "YouTube"}>
                {b.icon}
                {b.label && <BookmarkLabel $full={b.label.endsWith("...")}>{b.label}</BookmarkLabel>}
              </Bookmark>
            </li>
          ))}
        </BookmarkList>
        <SpacedEnd>
          <IconButton $w={40} aria-label="More bookmarks"><Line w={28} h={22} sw={3} d="M3 2 12 11 3 20M15 2 24 11 15 20" /></IconButton>
          <Separator />
          <Bookmark href="#"><FolderIcon />All Bookmarks</Bookmark>
        </SpacedEnd>
      </BookmarkBar>

      <Viewport>
        <Page>
          <PageHeader>
            <Brand href="#"><EmsMark w={66} />EMS</Brand>
            <SiteTitle>Welcome to the Frostburg State University On...</SiteTitle>
            <HeaderUser>
              <IconButton $w={47} aria-label="Help"><HelpIcon size={47} color="#3d3d3d" /></IconButton>
              <a href="#">Allen Flanagan</a>
            </HeaderUser>
          </PageHeader>

          <Body>
            <Sidebar>
              <SideNav aria-label="Main">
                <NavItem href="#" $active><Glyph name="home" />HOME</NavItem>
                <NavItem href="#"><span />ACADEMIC CALENDAR</NavItem>
                <NavItem href="#"><Glyph name="calendar" />CREATE A RESERVATION</NavItem>
                <NavItem href="#"><Glyph name="bell" />MY EVENTS</NavItem>
                <NavHeading>BROWSE</NavHeading>
                <NavItem href="#" $sub><Glyph name="bookmark" />EVENTS</NavItem>
                <NavItem href="#" $sub><Glyph name="marker" />LOCATIONS</NavItem>
                <NavItem href="#" $sub><Glyph name="user" />PEOPLE</NavItem>
                <NavRule />
                <NavHeading>LINKS</NavHeading>
                {links.map((l) => <SideLink href="#" key={l}>{l}</SideLink>)}
              </SideNav>
              <Track>
                <Arrow />
                <Thumb $part={86} />
                <Rest $part={14} />
              </Track>
            </Sidebar>

            <Main>
              <TabBar>
                <PageTab>SITE HOME</PageTab>
                <PageTab $active>MY HOME</PageTab>
                <TabAside>
                  <IconButton $w={42} aria-label="Page help"><HelpIcon size={42} color="#20447f" /></IconButton>
                </TabAside>
              </TabBar>
              <SectionTitle $first>My Reservation Templates</SectionTitle>
              <TemplateTable>
                <tbody>
                  {templates.map((t, i) => (
                    <tr key={t}>
                      <td>{t}</td>
                      <td>
                        <RowActions>
                          <SmallButton $pressed={i === 2}>book now</SmallButton>
                          <SmallButton $pressed={i === 2}>about</SmallButton>
                        </RowActions>
                      </td>
                    </tr>
                  ))}
                </tbody>
              </TemplateTable>
              <SectionTitle>My Bookings</SectionTitle>
              <TabBar>
                <PageTab $active>AUGUST 28, 2025</PageTab>
                <PageTab>SEARCH</PageTab>
                <TabAside><TimeZone>Eastern Time [ET]</TimeZone></TabAside>
              </TabBar>
              <Controls>
                <ViewLinks>
                  <button>Day</button>
                  <button>Month</button>
                  <button>Date<Line w={20} h={14} sw={2} d="M2 3 10 11 18 3" /></button>
                </ViewLinks>
                <PagerLinks>
                  <button>Previous</button>
                  <button>Today</button>
                  <button>Next</button>
                </PagerLinks>
              </Controls>
              <CalendarBox />
            </Main>
          </Body>

          <PageFooter>
            <Brand href="#" $small><EmsMark w={44} />EMS</Brand>
            <FooterBar />
            <span>v222.3</span>
            <Copyright>© Copyright 2025 Accruent All Rights Reserved</Copyright>
            <FooterLinks aria-label="Footer">
              {footerLinks.map((l) => <a href="#" key={l}>{l}</a>)}
            </FooterLinks>
          </PageFooter>
          <ChatButton aria-label="Open chat"><ChatIcon /></ChatButton>
        </Page>
        <Track $dark>
          <Arrow />
          <Thumb $part={105} />
          <Rest $part={95} />
          <Arrow down />
        </Track>
      </Viewport>

      <Taskbar>
        <WeatherSlot>
          <TaskIcon><WeatherIcon /><Badge $pink>3</Badge></TaskIcon>
        </WeatherSlot>
        <TaskList>
          <TaskButton aria-label="Start"><TaskIcon><WindowsIcon /></TaskIcon></TaskButton>
          <TaskButton aria-label="Search"><TaskIcon><SearchIcon /></TaskIcon></TaskButton>
          <TaskButton aria-label="Task view"><TaskIcon><TaskViewIcon /></TaskIcon></TaskButton>
          <TaskButton aria-label="Copilot"><TaskIcon><CopilotIcon size={46} /></TaskIcon></TaskButton>
          <TaskButton aria-label="Outlook"><TaskIcon><OutlookIcon /></TaskIcon></TaskButton>
          <TaskButton aria-label="File Explorer"><TaskIcon><ExplorerIcon /></TaskIcon></TaskButton>
          <TaskButton><TaskIcon $mark="dot"><ChromeIcon /></TaskIcon><TaskLabel $wide>Scribe | Work</TaskLabel></TaskButton>
          <TaskButton $active><TaskIcon $mark="bar"><ChromeIcon /></TaskIcon><TaskLabel $wide>Home / EMS</TaskLabel></TaskButton>
          <TaskButton aria-label="Microsoft 365"><TaskIcon><CopilotIcon size={58} /><M365Tag>M365</M365Tag></TaskIcon></TaskButton>
          <TaskButton><TaskIcon $mark="dot"><TeamsIcon /><Badge>3</Badge></TaskIcon><TaskLabel $wide>Chat | Elijah I</TaskLabel></TaskButton>
          <TaskButton><TaskIcon $mark="dot"><ShellIcon /></TaskIcon><TaskLabel>Shell</TaskLabel></TaskButton>
          <TaskButton><TaskIcon $mark="dot"><EmsTile /></TaskIcon><TaskLabel $wide>EMS 2020 - D</TaskLabel></TaskButton>
        </TaskList>
        <Tray>
          <Line w={40} h={40} sw={3} d="M8 26 20 13 32 26" />
          <CastIcon />
          <BluetoothIcon />
          <TrayGroup>
            <WifiIcon />
            <Line w={40} h={40} sw={3} d="M2 14V26H8L17 34V6L8 14ZM24 14 36 26M36 14 24 26" />
            <BatteryIcon />
          </TrayGroup>
          <Clock>5:54 PM<br />8/28/2025</Clock>
        </Tray>
      </Taskbar>
    </Screen>
  );
}
